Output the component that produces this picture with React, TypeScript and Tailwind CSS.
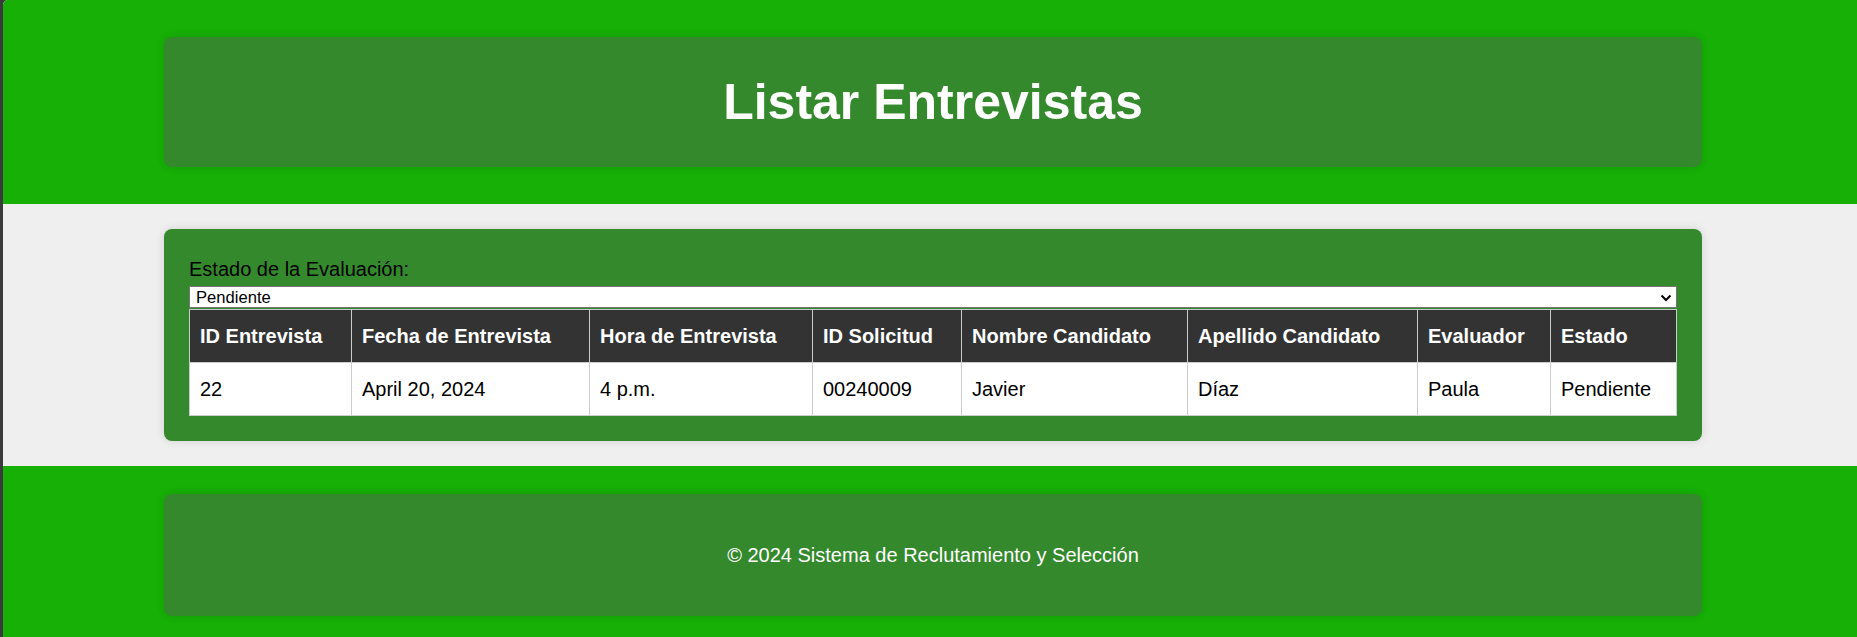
import React from 'react';

// Columnas de la tabla con sus anchos medidos
const COLUMNS = [
    { label: 'ID Entrevista', width: 'w-[162px]' },
    { label: 'Fecha de Entrevista', width: 'w-[238px]' },
    { label: 'Hora de Entrevista', width: 'w-[223px]' },
    { label: 'ID Solicitud', width: 'w-[149px]' },
    { label: 'Nombre Candidato', width: 'w-[226px]' },
    { label: 'Apellido Candidato', width: 'w-[230px]' },
    { label: 'Evaluador', width: 'w-[133px]' },
    { label: 'Estado', width: 'w-[126px]' },
];

const ENTREVISTAS = [
    ['22', 'April 20, 2024', '4 p.m.', '00240009', 'Javier', 'Díaz', 'Paula', 'Pendiente'],
];

const App: React.FC = () => {
    return (
        <div className="min-h-screen bg-[#3b3b3b] pl-[3px] font-['Liberation_Sans',Arial,sans-serif] text-[20px] text-black">
            <div className="rounded-tl-[5px] overflow-hidden bg-[#efefef]">
                {/* Header */}
                <header className="bg-[#16b006] pt-[37px] pb-[37px] pl-[161px]">
                    <div className="w-[1538px] h-[130px] flex items-center justify-center rounded-lg bg-[#34892c] shadow-[0_0_8px_rgba(0,0,0,0.12)]">
                        <h1 className="text-[50px] font-bold text-white leading-none">Listar Entrevistas</h1>
                    </div>
                </header>

                {/* Contenido */}
                <main className="pt-[25px] pb-[25px] pl-[161px]">
                    <div className="w-[1538px] rounded-lg bg-[#34892c] px-[25px] pt-[29px] pb-[25px] shadow-[0_0_10px_rgba(0,0,0,0.12)]">
                        <label className="block leading-[23px] mb-[5px]">Estado de la Evaluación:</label>
                        <div className="relative mb-px">
                            <select
                                defaultValue="Pendiente"
                                className="block w-full h-[22px] appearance-none bg-white border border-[#767676] pl-[6px] pt-[2px] pb-0 text-[16.6px] leading-[18px] text-black"
                            >
                                <option>Pendiente</option>
                                <option>Aprobado</option>
                                <option>Rechazado</option>
                            </select>
                            <svg
                                className="absolute right-[5px] top-[8px] pointer-events-none"
                                width="12"
                                height="8"
                                viewBox="0 0 12 8"
                            >
                                <polyline points="1.5,1.5 6,6 10.5,1.5" fill="none" stroke="#000" strokeWidth="2" />
                            </svg>
                        </div>

                        {/* Tabla */}
                        <table className="w-full table-fixed border-collapse">
                            <colgroup>
                                {COLUMNS.map((col) => (
                                    <col key={col.label} className={col.width} />
                                ))}
                            </colgroup>
                            <thead>
                                <tr className="bg-[#333333]">
                                    {COLUMNS.map((col) => (
                                        <th
                                            key={col.label}
                                            className="h-[53px] border border-[#cccccc] px-[10px] py-0 text-left font-bold text-white leading-[23px]"
                                        >
                                            {col.label}
                                        </th>
                                    ))}
                                </tr>
                            </thead>
                            <tbody>
                                {ENTREVISTAS.map((row, i) => (
                                    <tr key={i} className="bg-white">
                                        {row.map((cell, j) => (
                                            <td
                                                key={j}
                                                className="h-[53px] border border-[#cccccc] px-[10px] py-0 leading-[23px]"
                                            >
                                                {cell}
                                            </td>
                                        ))}
                                    </tr>
                                ))}
                            </tbody>
                        </table>
                    </div>
                </main>

                {/* Footer */}
                <footer className="bg-[#16b006] pt-[28px] pb-[28px] pl-[161px]">
                    <div className="w-[1538px] h-[122px] flex items-center justify-center rounded-lg bg-[#34892c] shadow-[0_0_8px_rgba(0,0,0,0.12)]">
                        <p className="text-white leading-[23px]">© 2024 Sistema de Reclutamiento y Selección</p>
                    </div>
                </footer>
            </div>
        </div>
    );
};

export default App;
